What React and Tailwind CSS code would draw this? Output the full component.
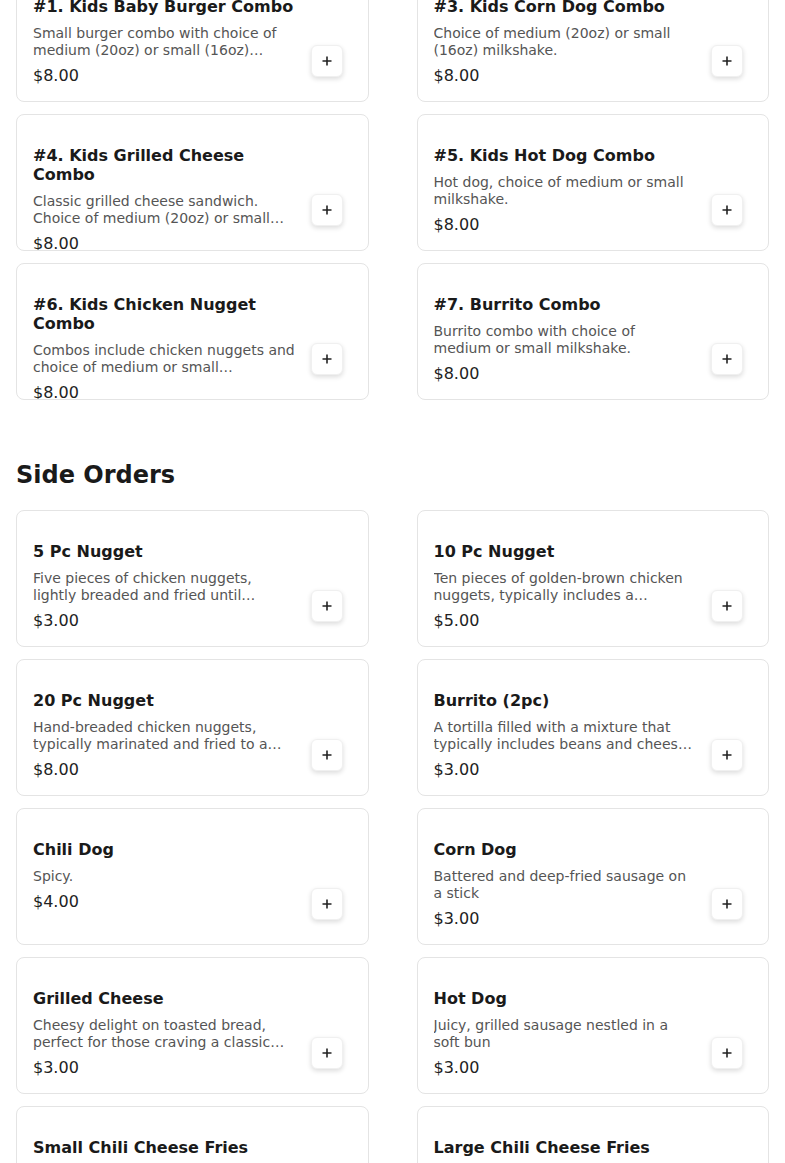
import React from "react";

const kids = [
  { t: "#1. Kids Baby Burger Combo", d: "Small burger combo with choice of medium (20oz) or small (16oz)…", p: "$8.00" },
  { t: "#3. Kids Corn Dog Combo", d: "Choice of medium (20oz) or small (16oz) milkshake.", p: "$8.00" },
  { t: "#4. Kids Grilled Cheese Combo", d: "Classic grilled cheese sandwich. Choice of medium (20oz) or small…", p: "$8.00" },
  { t: "#5. Kids Hot Dog Combo", d: "Hot dog, choice of medium or small milkshake.", p: "$8.00" },
  { t: "#6. Kids Chicken Nugget Combo", d: "Combos include chicken nuggets and choice of medium or small…", p: "$8.00" },
  { t: "#7. Burrito Combo", d: "Burrito combo with choice of medium or small milkshake.", p: "$8.00" },
];

const sides = [
  { t: "5 Pc Nugget", d: "Five pieces of chicken nuggets, lightly breaded and fried until…", p: "$3.00" },
  { t: "10 Pc Nugget", d: "Ten pieces of golden-brown chicken nuggets, typically includes a…", p: "$5.00" },
  { t: "20 Pc Nugget", d: "Hand-breaded chicken nuggets, typically marinated and fried to a…", p: "$8.00" },
  { t: "Burrito (2pc)", d: "A tortilla filled with a mixture that typically includes beans and chees…", p: "$3.00" },
  { t: "Chili Dog", d: "Spicy.", p: "$4.00" },
  { t: "Corn Dog", d: "Battered and deep-fried sausage on a stick", p: "$3.00" },
  { t: "Grilled Cheese", d: "Cheesy delight on toasted bread, perfect for those craving a classic…", p: "$3.00" },
  { t: "Hot Dog", d: "Juicy, grilled sausage nestled in a soft bun", p: "$3.00" },
  { t: "Small Chili Cheese Fries", d: "Crispy fries topped with chili and melted cheese.", p: "$4.00" },
  { t: "Large Chili Cheese Fries", d: "Crispy fries topped with chili and melted cheese.", p: "$6.00" },
];

function Card({ t, d, p }) {
  return (
    <div className="h-[137px] overflow-hidden rounded-lg border border-[#e4e4e4] bg-white flex items-start gap-[15px] pl-4 pr-[25px]">
      <div className="flex-1 min-w-0 pt-[31px]">
        <div className="text-[16px] leading-[19px] font-bold text-[#1a1a1a]">{t}</div>
        <div className="mt-[9px] text-[14px] leading-[17px] text-[#555] line-clamp-2">{d}</div>
        <div className="mt-[7px] text-[16px] leading-[20px] text-[#222]">{p}</div>
      </div>
      <button className="mt-[79px] w-8 h-8 shrink-0 rounded-md bg-white border border-[#f0f0f0] shadow-[0_2px_5px_rgba(0,0,0,0.14)] flex items-center justify-center">
        <svg width="10" height="10" viewBox="0 0 10 10">
          <path d="M5 0.5v9M0.5 5h9" stroke="#222" strokeWidth="1.6" fill="none" />
        </svg>
      </button>
    </div>
  );
}

export default function App() {
  return (
    <div className="bg-white font-['DejaVu_Sans',sans-serif] min-h-screen overflow-hidden">
      <div className="px-4 -mt-[35px] pb-10">
        <div className="grid grid-cols-2 gap-x-12 gap-y-3">
          {kids.map((k) => (
            <Card key={k.t} {...k} />
          ))}
        </div>
        <h2 className="mt-[59px] mb-[19px] text-[24px] leading-[32px] font-bold text-[#1a1a1a]">Side Orders</h2>
        <div className="grid grid-cols-2 gap-x-12 gap-y-3">
          {sides.map((k) => (
            <Card key={k.t} {...k} />
          ))}
        </div>
      </div>
    </div>
  );
}
